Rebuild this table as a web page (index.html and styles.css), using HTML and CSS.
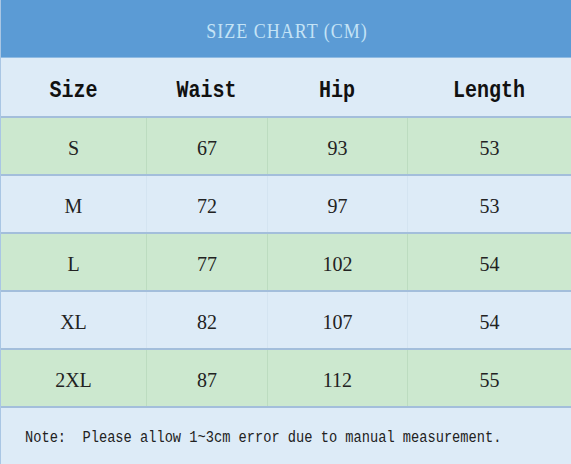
FILE: index.html
```html
<!DOCTYPE html>
<html>
<head>
<meta charset="utf-8">
<link rel="stylesheet" href="styles.css">
</head>
<body>
<div class="chart">
  <div class="title"><span class="tall">SIZE CHART (CM)</span></div>
  <div class="grid">
    <div class="row head">
      <div class="cell"><span class="tall">Size</span></div>
      <div class="cell"><span class="tall">Waist</span></div>
      <div class="cell"><span class="tall">Hip</span></div>
      <div class="cell"><span class="tall">Length</span></div>
    </div>
    <div class="row green">
      <div class="cell">S</div><div class="cell">67</div><div class="cell">93</div><div class="cell">53</div>
    </div>
    <div class="row blue">
      <div class="cell">M</div><div class="cell">72</div><div class="cell">97</div><div class="cell">53</div>
    </div>
    <div class="row green">
      <div class="cell">L</div><div class="cell">77</div><div class="cell">102</div><div class="cell">54</div>
    </div>
    <div class="row blue">
      <div class="cell">XL</div><div class="cell">82</div><div class="cell">107</div><div class="cell">54</div>
    </div>
    <div class="row green">
      <div class="cell">2XL</div><div class="cell">87</div><div class="cell">112</div><div class="cell">55</div>
    </div>
  </div>
  <div class="note"><span class="tall">Note:  Please allow 1~3cm error due to manual measurement.</span></div>
</div>
</body>
</html>
```

FILE: styles.css
```css
html, body {
  margin: 0;
  padding: 0;
  background: #ddebf7;
}

.chart {
  width: 571px;
  height: 464px;
  display: flex;
  flex-direction: column;
  background: #ddebf7;
  border-left: 1px solid #a9c6e4;
  box-sizing: border-box;
}

.tall {
  display: inline-block;
  transform: scaleY(1.2);
}

.title {
  height: 58px;
  background: #5b9bd5;
  color: #c4e3f6;
  font-family: "Liberation Serif", serif;
  font-size: 18px;
  letter-spacing: 1px;
  display: flex;
  align-items: center;
  justify-content: center;
  padding-top: 5px;
  padding-left: 2px;
  box-sizing: border-box;
  border-bottom: 1px solid #8fbbe3;
}

.grid {
  display: flex;
  flex-direction: column;
}

.row {
  height: 58px;
  display: grid;
  grid-template-columns: 145px 121px 140px 164px;
  box-sizing: border-box;
}

.head {
  background: #ddebf7;
  font-family: "Liberation Mono", monospace;
  font-weight: bold;
  font-size: 20px;
  color: #111;
}

.head .cell {
  padding-top: 6px;
}

.green, .blue {
  border-top: 2px solid #a3bedb;
  font-family: "Liberation Serif", serif;
  font-size: 20px;
  color: #222;
}

.green .cell, .blue .cell {
  padding-top: 4px;
}

.green {
  background: #cce8cf;
}

.blue {
  background: #ddebf7;
}

.cell {
  display: flex;
  align-items: center;
  justify-content: center;
}

.green .cell + .cell {
  border-left: 1px solid #bcdcc0;
}

.blue .cell + .cell {
  border-left: 1px solid #d4e4f1;
}

.note {
  flex: 1;
  display: flex;
  align-items: center;
  border-top: 2px solid #a3bedb;
  padding-left: 24px;
  padding-top: 3px;
  font-family: "Liberation Mono", monospace;
  font-size: 13.7px;
  color: #222;
  white-space: pre;
}
```
